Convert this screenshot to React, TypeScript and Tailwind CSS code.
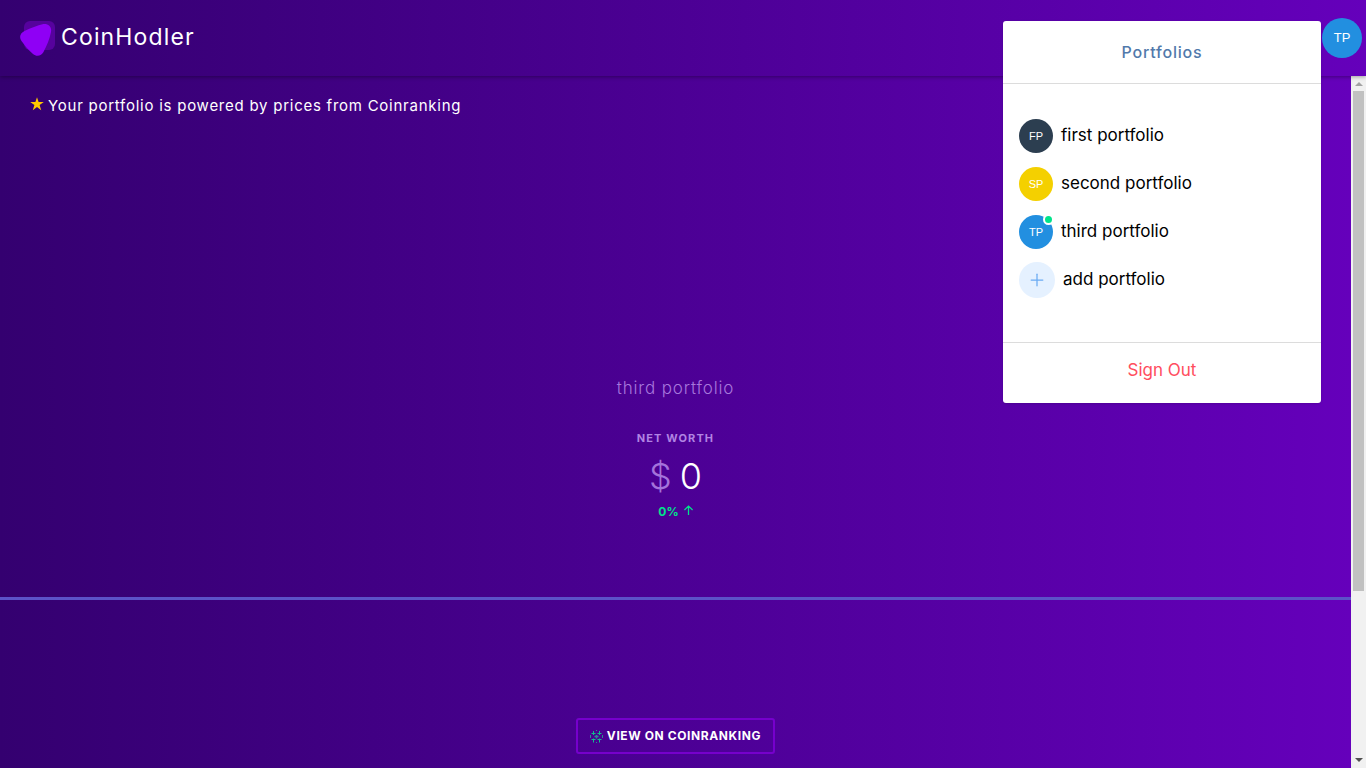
import { Plus } from "lucide-react";

type Portfolio = { name: string; initials: string; color: string; active?: boolean };

const portfolios: Portfolio[] = [
  { name: "first portfolio", initials: "FP", color: "bg-[#2c3e50]" },
  { name: "second portfolio", initials: "SP", color: "bg-[#f4d000]" },
  { name: "third portfolio", initials: "TP", color: "bg-[#228fe0]", active: true },
];

function Logo() {
  return (
    <svg width="36" height="36" viewBox="0 0 36 36" aria-hidden="true">
      <rect x="4" y="1" width="31" height="29" rx="6" fill="#56029d" />
      <path
        d="M4.500 11 C11 8 17 5.500 23.500 4 C28.500 3.500 32 7 31 12 C29.500 19 27 25.500 23.500 32 C21.500 36 16.500 37 13 34 C8.500 30 5 26 1.500 21 C-1.200 17 .2 13 4.500 11Z"
        fill="#8f00f5"
      />
    </svg>
  );
}

function Star() {
  return (
    <svg width="14" height="14" viewBox="0 0 14 14" className="-mt-1" aria-hidden="true">
      <path
        d="M7 .2 8.600 5H13.800L9.600 8.100 11.200 13.200 7 10.100 2.800 13.200 4.400 8.100 .2 5H5.400Z"
        fill="#ffc800"
      />
    </svg>
  );
}

function CoinrankingMark() {
  return (
    <svg width="13" height="13" viewBox="0 0 13 13" fill="none" stroke="#10bd8c" aria-hidden="true">
      <path d="M3.500 1v4M1.500 3.500h4M9.500 1v4M7.500 3.500h4M3.500 8.500v4M1.500 9.500h4M9.500 8.500v4M7.500 9.500h4" />
      <path d="M6.500 5v3.500M4.500 6.500h4" stroke="#2a8a94" strokeWidth="1.500" />
      <path d="M6 .5h1M6 12.500h1M.5 5v3M12.500 5v3" stroke="#2a8a94" />
    </svg>
  );
}

function ArrowUp() {
  return (
    <svg
      width="9"
      height="10"
      viewBox="0 0 9 10"
      fill="none"
      stroke="#00e48b"
      strokeWidth="1.250"
      className="-mt-1"
      aria-hidden="true"
    >
      <path d="M4.500 10V1M.4 5l4.100-4 4.100 4" />
    </svg>
  );
}

function PortfolioMenu() {
  return (
    <div className="absolute top-[21px] right-[45px] z-20 w-[318px] rounded-[3px] bg-white shadow-sm">
      <h2 className="border-b border-[#dcdcdc] py-5 text-center text-base leading-[22px] font-medium tracking-wider text-[#5179ab]">
        Portfolios
      </h2>
      <ul className="px-4 pt-7 pb-[38px]">
        {portfolios.map((p) => (
          <li key={p.name}>
            <button type="button" className="flex h-12 w-full items-center gap-2 text-left">
              <span
                className={`relative grid size-[34px] shrink-0 place-items-center rounded-full pt-px font-['Liberation_Sans',sans-serif] text-[11px] text-white ${p.color}`}
              >
                {p.initials}
                {p.active && (
                  <span className="absolute -top-px -right-px size-[11px] rounded-full border-2 border-white bg-[#00e48b]" />
                )}
              </span>
              <span className="pb-[3px] text-[17px] leading-6 text-black">{p.name}</span>
            </button>
          </li>
        ))}
        <li>
          <button type="button" className="flex h-12 w-full items-center gap-2 text-left">
            <span className="grid size-9 shrink-0 place-items-center rounded-full bg-[#e5f1ff] text-[#6aabf3]">
              <Plus size={20} strokeWidth={1.5} />
            </span>
            <span className="pb-[3px] text-[17px] leading-6 text-black">add portfolio</span>
          </button>
        </li>
      </ul>
      <div className="border-t border-[#dcdcdc] pt-[15px] pb-[21px] text-center">
        <button type="button" className="text-[17px] leading-6 text-[#ff4d5e]">
          Sign Out
        </button>
      </div>
    </div>
  );
}

function ScrollTrack() {
  return (
    <div className="flex w-[15px] shrink-0 flex-col items-center justify-between bg-[#f1f1f1]" aria-hidden="true">
      <div className="flex w-full flex-1 flex-col items-center">
        <span className="grid h-[15px] place-items-center">
          <svg width="8" height="4" viewBox="0 0 8 4">
            <path d="M4 0 8 4H0Z" fill="#a3a3a3" />
          </svg>
        </span>
        <span className="h-[74%] w-[11px] bg-[#c1c1c1]" />
      </div>
      <span className="grid h-[17px] place-items-center">
        <svg width="8" height="4" viewBox="0 0 8 4">
          <path d="M0 0H8L4 4Z" fill="#505050" />
        </svg>
      </span>
    </div>
  );
}

export default function App() {
  return (
    <div className="relative flex min-h-screen flex-col bg-[#34006f] font-[Inter,sans-serif]">
      <header className="relative z-10 flex h-[76px] items-center justify-between bg-linear-to-r from-[#340070] to-[#6500bb] pr-1 pl-5 shadow-[0_1px_4px_rgba(0,0,0,0.35)]">
        <a href="#home" className="flex items-center gap-[5px] text-[23px] leading-8 tracking-wider text-white">
          <Logo />
          <span className="pb-[3px]">CoinHodler</span>
        </a>
        <button
          type="button"
          aria-label="Open portfolios"
          className="grid size-10 place-items-center rounded-full bg-[#228fe0] font-['Liberation_Sans',sans-serif] text-[13px] text-white"
        >
          TP
        </button>
      </header>
      <PortfolioMenu />
      <div className="flex flex-1">
        <main className="flex flex-1 flex-col bg-linear-to-r from-[#340070] to-[#6500bb]">
          <section className="flex flex-1 flex-col border-b-3 border-[#5c52c8] pb-[75px]">
            <p className="flex items-center gap-1 px-[30px] pt-5 text-[15px] leading-5 tracking-wider text-white">
              <Star />
              Your portfolio is powered by prices from Coinranking
            </p>
            <div className="mt-auto flex flex-col items-center">
              <h1 className="text-[17px] leading-6 font-light tracking-wider text-[#a777dc]">third portfolio</h1>
              <h2 className="mt-[30px] text-[11px] leading-4 font-bold tracking-widest text-[#b184e3]">NET WORTH</h2>
              <p className="mt-2 flex gap-2 text-4xl leading-[44px] font-light text-white">
                <span className="text-[#a473db]">$</span>
                <span>0</span>
              </p>
              <p className="mt-1 flex items-center gap-[5px] text-xs leading-5 font-bold text-[#00e48b]">
                0% <ArrowUp />
              </p>
            </div>
          </section>
          <div className="flex justify-center pt-[118px] pb-[14px]">
            <a
              href="#coinranking"
              className="flex h-9 items-center gap-1 rounded-[3px] border-2 border-[#7600cc] px-3 text-xs font-bold tracking-wider text-white"
            >
              <CoinrankingMark />
              VIEW ON COINRANKING
            </a>
          </div>
        </main>
        <ScrollTrack />
      </div>
    </div>
  );
}
